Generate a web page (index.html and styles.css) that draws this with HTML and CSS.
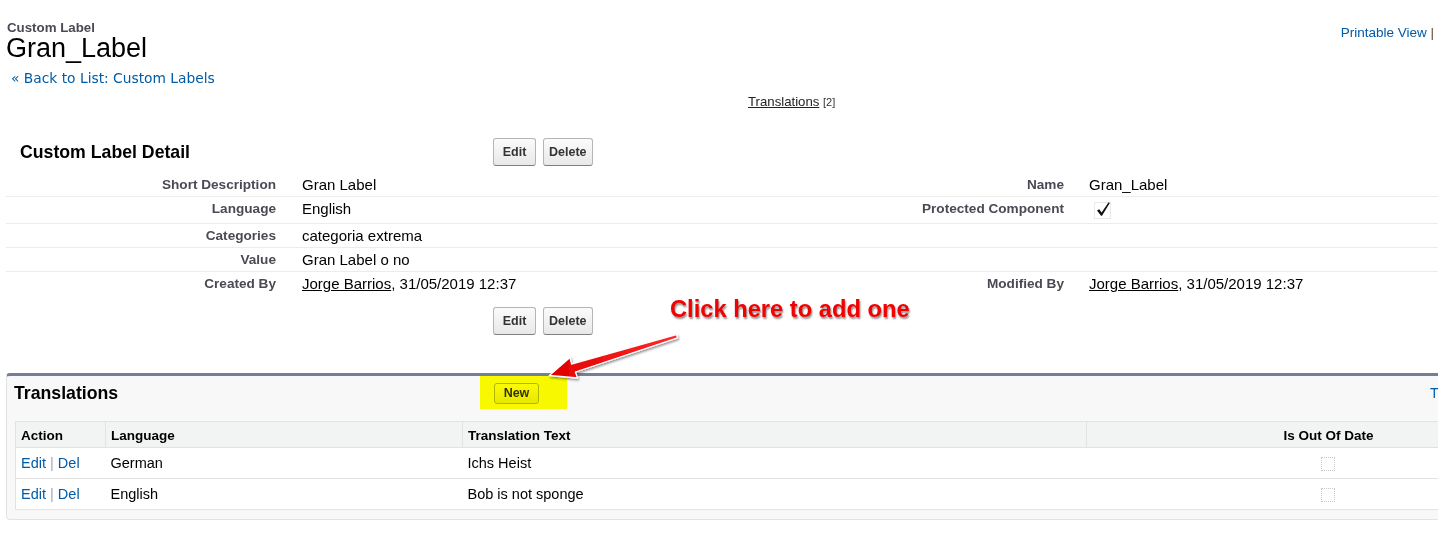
FILE: index.html
```html
<!DOCTYPE html>
<html>
<head>
<meta charset="utf-8">
<title>Custom Label: Gran_Label</title>
<link rel="stylesheet" href="styles.css">
</head>
<body>
<div class="page">
  <div class="top">
    <div class="title-block">
      <div class="type">Custom Label</div>
      <h1 class="name">Gran_Label</h1>
      <a class="back" href="#">« Back to List: Custom Labels</a>
    </div>
    <div class="links"><a href="#">Printable View</a> <span class="pipe">|</span></div>
  </div>

  <div class="hover-links"><a class="rl-link" href="#">Translations</a> <span class="count">[2]</span></div>

  <section class="detail">
    <div class="pb-header">
      <h2 class="pb-title">Custom Label Detail</h2>
      <div class="btns"><button class="btn">Edit</button><button class="btn">Delete</button></div>
    </div>
    <div class="dlist">
      <div class="drow">
        <div class="lbl">Short Description</div><div class="val">Gran Label</div>
        <div class="lbl">Name</div><div class="val val-r">Gran_Label</div>
      </div>
      <div class="drow drow-tall">
        <div class="lbl">Language</div><div class="val">English</div>
        <div class="lbl">Protected Component</div>
        <div class="val val-r">
          <svg class="chk" width="18" height="19" viewBox="0 0 18 19">
            <rect x="0.5" y="2.5" width="16" height="16" fill="none" stroke="#d4d4d4" stroke-dasharray="1 1"/>
            <path d="M3 10.5 L5.3 9.2 L7.6 12.4 L14.6 2.2 L15.8 3 L8 15.8 L7 15.8 Z" fill="#111"/>
          </svg>
        </div>
      </div>
      <div class="drow">
        <div class="lbl">Categories</div><div class="val">categoria extrema</div>
        <div class="lbl"></div><div class="val val-r"></div>
      </div>
      <div class="drow">
        <div class="lbl">Value</div><div class="val">Gran Label o no</div>
        <div class="lbl"></div><div class="val val-r"></div>
      </div>
      <div class="drow drow-last">
        <div class="lbl">Created By</div><div class="val"><a class="user" href="#">Jorge Barrios</a>, 31/05/2019 12:37</div>
        <div class="lbl">Modified By</div><div class="val val-r"><a class="user" href="#">Jorge Barrios</a>, 31/05/2019 12:37</div>
      </div>
    </div>
    <div class="pb-footer">
      <div></div>
      <div class="btns"><button class="btn">Edit</button><button class="btn">Delete</button></div>
    </div>
  </section>

  <section class="related">
    <div class="rl-header">
      <h2 class="pb-title">Translations</h2>
      <div class="btns"><button class="btn btn-sm">New</button></div>
      <a class="help" href="#">Translations Help</a>
    </div>
    <table class="list">
      <thead>
        <tr>
          <th class="c-action">Action</th>
          <th class="c-lang">Language</th>
          <th class="c-text">Translation Text</th>
          <th class="c-ood">Is Out Of Date</th>
        </tr>
      </thead>
      <tbody>
        <tr>
          <td><a href="#">Edit</a> <span class="sep">|</span> <a href="#">Del</a></td>
          <td>German</td>
          <td>Ichs Heist</td>
          <td class="c-ood"><span class="ubox"></span></td>
        </tr>
        <tr>
          <td><a href="#">Edit</a> <span class="sep">|</span> <a href="#">Del</a></td>
          <td>English</td>
          <td>Bob is not sponge</td>
          <td class="c-ood"><span class="ubox"></span></td>
        </tr>
      </tbody>
    </table>
  </section>

  <div class="highlight"></div>
  <div class="callout">Click here to add one</div>
  <svg class="arrow" width="150" height="60" viewBox="540 325 150 60">
    <defs>
      <linearGradient id="ar" x1="0" y1="0" x2="1" y2="0">
        <stop offset="0" stop-color="#e00000"/>
        <stop offset="1" stop-color="#ff2a2a"/>
      </linearGradient>
      <filter id="sh" x="-20%" y="-40%" width="140%" height="180%">
        <feDropShadow dx="1" dy="1.5" stdDeviation="1.2" flood-color="#000" flood-opacity="0.45"/>
      </filter>
    </defs>
    <polygon points="549.3,375.5 570,357.5 571.6,364 676.5,334.6 677.5,337.8 575.4,372 577.6,378" fill="url(#ar)" stroke="#fff" stroke-width="1.3" stroke-linejoin="round" filter="url(#sh)"/>
  </svg>
</div>
</body>
</html>
```
FILE: styles.css
```css
* { box-sizing: border-box; }
html, body { margin: 0; padding: 0; }
body {
  font-family: "Liberation Sans", Arial, sans-serif;
  color: #000;
  background: #fff;
  width: 1438px;
  height: 534px;
  overflow: hidden;
}
.page { position: relative; width: 1438px; height: 534px; }
a { color: #015ba7; text-decoration: none; }

/* header */
.top { display: flex; justify-content: space-between; padding: 21px 4px 0 6px; }
.type { font-size: 13.3px; font-weight: bold; color: #4a4a56; line-height: 14px; padding-left: 1px; }
.name { font-size: 27px; font-weight: normal; line-height: 27px; margin: 0; }
.back {
  display: block;
  margin: 8px 0 0 5px;
  font-family: "DejaVu Sans", Verdana, sans-serif;
  font-size: 13.8px;
  line-height: 16px;
}
.links { font-size: 13.5px; line-height: 16px; padding-top: 4px; }
.pipe { color: #5a4a30; }

.hover-links { margin: 8px 0 0 748px; font-size: 13.2px; line-height: 15px; }
.rl-link { color: #222; text-decoration: underline; }
.count { font-size: 11px; color: #333; }

/* buttons */
.btns { display: flex; gap: 7px; align-items: center; }
.btn {
  font-family: "Liberation Sans", Arial, sans-serif;
  font-size: 12.5px;
  font-weight: bold;
  color: #333;
  height: 28px;
  min-width: 43px;
  padding: 0 5px;
  border: 1px solid #b5b5b5;
  border-bottom-color: #7f7f7f;
  border-radius: 3px;
  background: linear-gradient(#fbfbfb, #e8e8e8);
}
.btn-sm { height: 21px; min-width: 45px; border-color: #b5b5b5; }

/* detail */
.detail { margin: 28px 0 0 6px; width: 1565px; }
.pb-header, .pb-footer {
  display: grid;
  grid-template-columns: 473px auto;
  align-items: center;
  height: 28px;
  padding-left: 14px;
}
.pb-title { font-size: 17.7px; font-weight: bold; margin: 0; color: #000; line-height: 20px; padding-bottom: 1px; }
.dlist { margin-top: 7px; }
.drow {
  display: grid;
  grid-template-columns: 282px 503px 285px 1fr;
  height: 24px;
  border-bottom: 1px solid #ececec;
}
.drow-tall { height: 27px; }
.drow-last { border-bottom: none; }
.lbl {
  font-size: 13.6px;
  font-weight: bold;
  color: #4a4a56;
  text-align: right;
  line-height: 15px;
  padding: 3.5px 12px 0 0;
}
.val { font-size: 15px; line-height: 17px; padding: 3px 0 0 14px; }
.val-r { padding-left: 13px; }
.user { color: #000; text-decoration: underline; }
.chk { display: block; margin: 0 0 0 5px; }
.pb-footer { margin-top: 11px; }

/* related list */
.related {
  margin: 38px 0 0 6px;
  width: 1580px;
  background: #f8f8f8;
  border: 1px solid #e3e3e3;
  border-top: 3px solid #747e96;
  border-radius: 4px;
  padding: 3px 0 9px 8px;
}
.rl-header {
  display: grid;
  grid-template-columns: 480px 936px auto;
  align-items: center;
  height: 28px;
  margin: 0 0 14px -1px;
}
.help { font-size: 14px; }
.list {
  width: 1556px;
  border-collapse: collapse;
  border: 1px solid #e0e3e5;
  table-layout: fixed;
}
.list th {
  background: #f2f3f3;
  height: 26px;
  font-size: 13.5px;
  font-weight: bold;
  text-align: left;
  padding: 2px 5px 0 5px;
  border-right: 1px solid #e0e3e5;
  border-bottom: 1px solid #e0e3e5;
  color: #000;
}
.list th.c-ood { text-align: center; }
.c-action { width: 90px; }
.c-lang { width: 357px; }
.c-text { width: 624px; }
.list td {
  background: #fff;
  height: 31px;
  font-size: 14.5px;
  padding: 0 5px;
  border-bottom: 1px solid #e3e3e3;
  vertical-align: middle;
}
.list td.c-ood { text-align: center; }
.sep { color: #9aaabf; }
.ubox {
  display: inline-block;
  width: 14px;
  height: 14px;
  border: 1px dotted #c8c8c8;
  vertical-align: middle;
}

/* annotations */
.highlight {
  position: absolute;
  left: 480px;
  top: 376px;
  width: 87px;
  height: 33px;
  background: #ffff00;
  mix-blend-mode: multiply;
}
.callout {
  position: absolute;
  left: 670px;
  top: 296px;
  font-size: 23.7px;
  line-height: 26px;
  font-weight: bold;
  color: #f40000;
  -webkit-text-stroke: 3px #fff;
  paint-order: stroke fill;
  text-shadow: 1px 1.5px 2px rgba(0,0,0,0.45);
  white-space: nowrap;
}
.arrow { position: absolute; left: 540px; top: 325px; overflow: visible; }
```
